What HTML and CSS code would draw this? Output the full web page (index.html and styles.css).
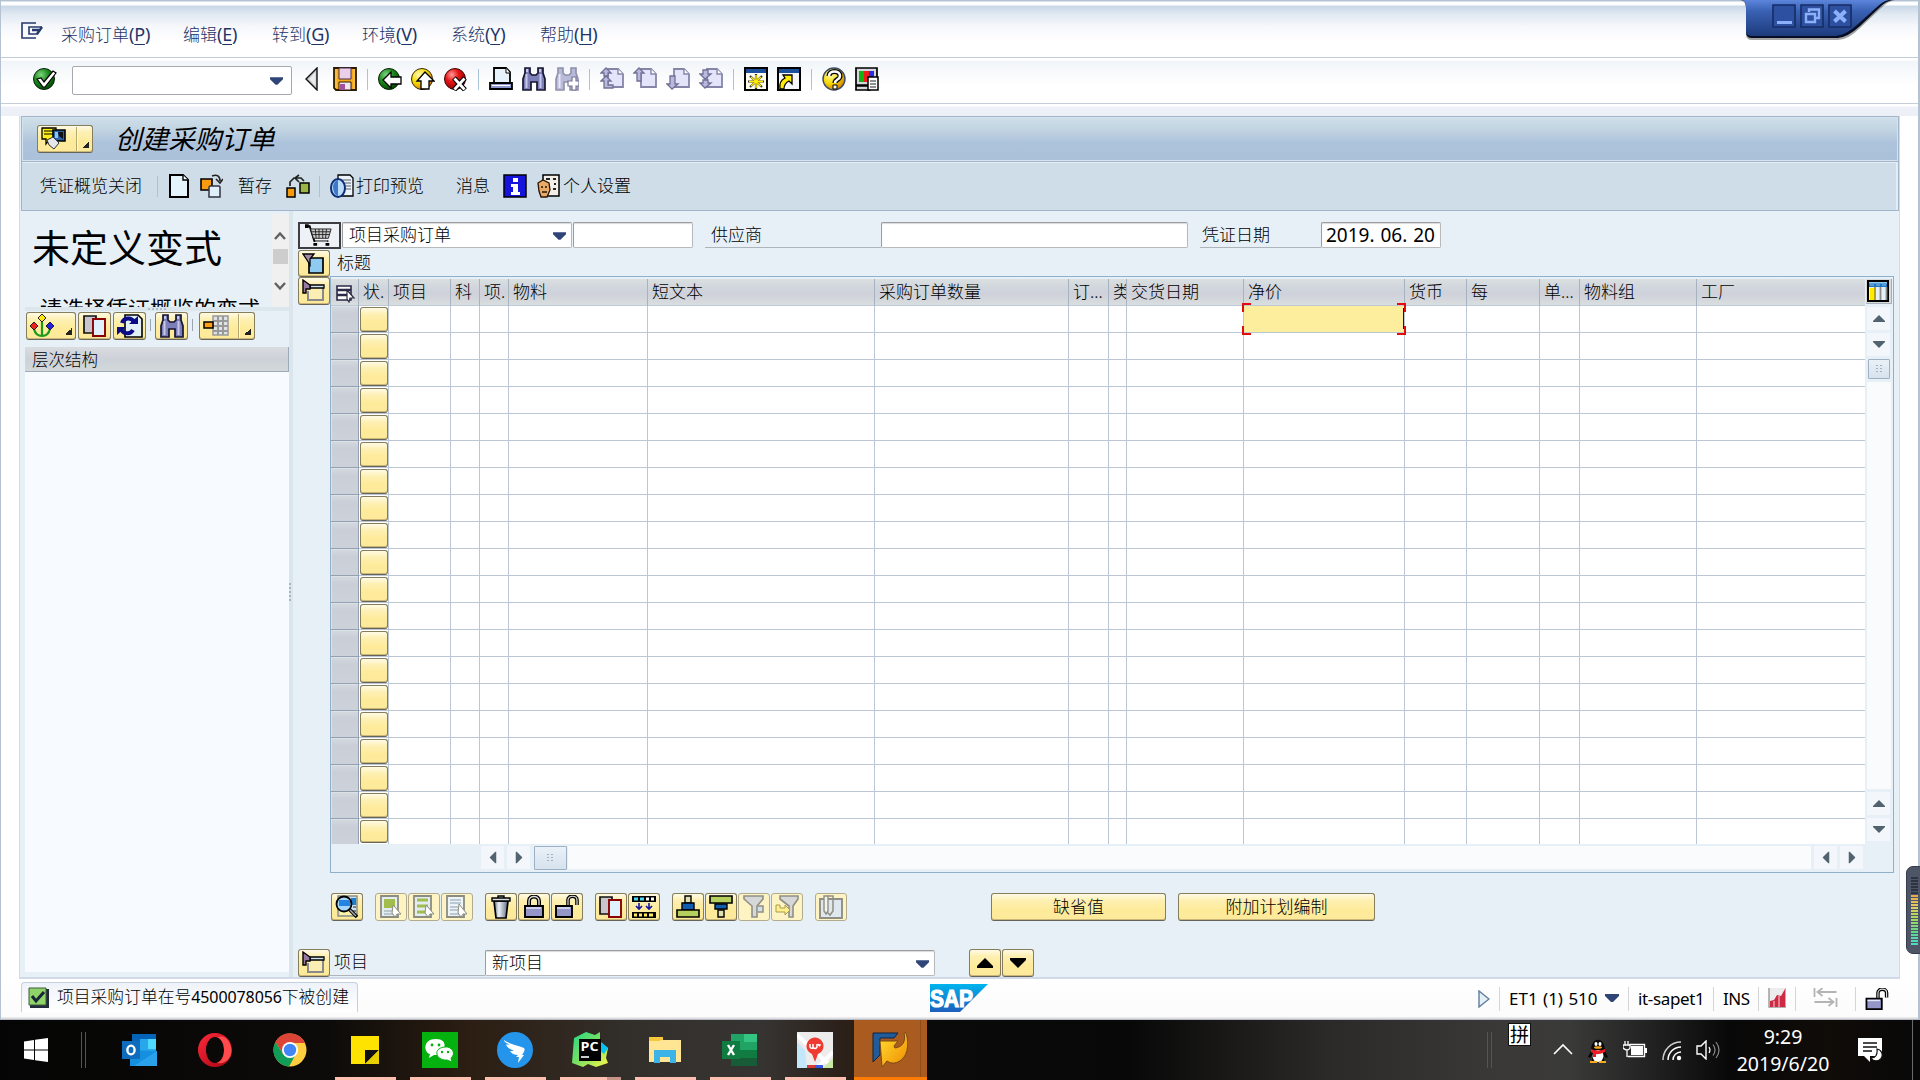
FILE: index.html
```html
<!DOCTYPE html>
<html lang="zh-CN">
<head>
<meta charset="utf-8">
<title>创建采购订单</title>
<link rel="stylesheet" href="styles.css">
</head>
<body>
<svg class="sprite" aria-hidden="true">
  <defs>
    <radialGradient id="g-green" cx=".35" cy=".3" r=".8"><stop offset="0" stop-color="#7fd67f"/><stop offset=".45" stop-color="#1c8a1c"/><stop offset="1" stop-color="#003c00"/></radialGradient>
    <radialGradient id="g-yellow" cx=".35" cy=".3" r=".8"><stop offset="0" stop-color="#fffbb0"/><stop offset=".5" stop-color="#f5d800"/><stop offset="1" stop-color="#d06a00"/></radialGradient>
    <radialGradient id="g-red" cx=".35" cy=".3" r=".8"><stop offset="0" stop-color="#ff9a9a"/><stop offset=".4" stop-color="#e81414"/><stop offset="1" stop-color="#7a0000"/></radialGradient>
    <linearGradient id="g-sap" x1="0" y1="0" x2="0" y2="1"><stop offset="0" stop-color="#00b4ee"/><stop offset="1" stop-color="#1d5fbe"/></linearGradient>
    <linearGradient id="g-tab" x1="0" y1="0" x2="0" y2="1"><stop offset="0" stop-color="#5c86dc"/><stop offset=".3" stop-color="#3a62b4"/><stop offset="1" stop-color="#1d3a7c"/></linearGradient>
    <linearGradient id="g-can" x1="0" y1="0" x2="1" y2="0"><stop offset="0" stop-color="#68707a"/><stop offset=".35" stop-color="#eef2f8"/><stop offset="1" stop-color="#5d6c84"/></linearGradient>
    <linearGradient id="g-opera" x1="0" y1="0" x2="1" y2="1"><stop offset="0" stop-color="#ff2b3c"/><stop offset="1" stop-color="#a50010"/></linearGradient>
    <linearGradient id="g-py" x1="0" y1="0" x2="1" y2="1"><stop offset="0" stop-color="#21d789"/><stop offset=".5" stop-color="#7be060"/><stop offset="1" stop-color="#fcf84a"/></linearGradient>
    <linearGradient id="g-gold" x1="0" y1="0" x2="1" y2="1"><stop offset="0" stop-color="#ffdf30"/><stop offset="1" stop-color="#f08a00"/></linearGradient>
  </defs>
  <symbol id="i-menu" viewBox="0 0 22 18"><path d="M15 1H1v15h14M21 5H8v7h9" fill="none" stroke="#24386c" stroke-width="1.6"/><path d="M21 5l-5 7M11 8h7" fill="none" stroke="#24386c" stroke-width="2.4"/></symbol>
  <symbol id="i-ok" viewBox="0 0 24 24"><circle cx="11" cy="12" r="10.5" fill="url(#g-green)" stroke="#062006"/><path d="M4 12l4-1 3 4L20 4l3 2-11 14h-2z" fill="#fff" stroke="#000" stroke-width="1.2"/></symbol>
  <symbol id="i-prev" viewBox="0 0 24 24"><path d="M17 1v22L6 12z" fill="#c9c9c9" stroke="#111" stroke-width="1.4"/><path d="M15.500 5v14L9 12z" fill="#ececec"/></symbol>
  <symbol id="i-save" viewBox="0 0 24 24"><path d="M1 1h22v22H3l-2-2z" fill="#f5a81c" stroke="#2b1a00" stroke-width="1.8"/><path d="M6 1h12v11H6z" fill="#e9cfe9" stroke="#4b3050"/><path d="M6 15h12v8H6z" fill="#f2e6ee" stroke="#2b1a00"/><path d="M7 17h5v6H7z" fill="#a0529a"/><path d="M3 2v19M21 2v20" stroke="#ffd060"/></symbol>
  <symbol id="i-back" viewBox="0 0 24 24"><circle cx="11" cy="12" r="10.500" fill="url(#g-green)" stroke="#062006"/><path d="M5 13l8-8v5h10v7H13v4z" fill="#fff" stroke="#000" stroke-width="1.3"/></symbol>
  <symbol id="i-exit" viewBox="0 0 24 24"><circle cx="11" cy="12" r="10.500" fill="url(#g-yellow)" stroke="#3c2a00"/><path d="M14 5l9 9h-5v8h-8v-8H6z" fill="#fff" stroke="#000" stroke-width="1.3"/></symbol>
  <symbol id="i-cancel" viewBox="0 0 24 24"><circle cx="11" cy="12" r="10.500" fill="url(#g-red)" stroke="#3c0000"/><path d="M10 11l11 12M21 11L10 23" stroke="#000" stroke-width="5"/><path d="M10.500 11.500l10 11M20.500 11.500l-10 11" stroke="#fff" stroke-width="2.800"/></symbol>
  <symbol id="i-print" viewBox="0 0 24 24"><path d="M5 16V1h12l4 4v11z" fill="#e8f2fa" stroke="#000" stroke-width="1.800"/><path d="M17 1v5h4" fill="#fff" stroke="#000"/><path d="M1 16h22v6H1z" fill="#8f95cf" stroke="#000" stroke-width="1.800"/><path d="M3 18.500h18" stroke="#fff"/></symbol>
  <symbol id="i-find" viewBox="0 0 24 24"><path d="M3 1h5v5l2 2h4l2-2V1h5v5l2 6v11h-8v-8h-6v8H1V12l2-6z" fill="#7d7fb8" stroke="#15152e" stroke-width="1.700"/><path d="M4.500 7v14M18.500 7v14M5 2v3M18 2v3" stroke="#c5c8ea" stroke-width="2"/></symbol>
  <symbol id="i-findnext" viewBox="0 0 24 24"><g opacity=".6"><path d="M3 1h5v5l2 2h4l2-2V1h5v5l2 6v11h-8v-8h-6v8H1V12l2-6z" fill="#8f91c4" stroke="#4a4a72" stroke-width="1.600"/><path d="M4.500 7v14" stroke="#d5d8f2" stroke-width="2"/></g><path d="M13 14h4v-4h4v4h3v5h-3v4h-4v-4h-4z" fill="#fff" stroke="#77779b" stroke-width="1.200"/></symbol>
  <symbol id="i-page" viewBox="0 0 24 24"><path d="M8 2h10l5 5v13H8z" fill="#e4e4fa" stroke="#8585a8" stroke-width="1.800"/><path d="M18 2v5h5" fill="#fff" stroke="#8585a8" stroke-width="1.400"/></symbol>
  <symbol id="i-first" viewBox="0 0 24 24"><use href="#i-page"/><path d="M6 1l5 5H8v3H4V6H1zM6 9l5 5H8v4h5v3H4v-7H1z" fill="#b9b9de" stroke="#707096" stroke-width="1.300"/></symbol>
  <symbol id="i-pgup" viewBox="0 0 24 24"><use href="#i-page"/><path d="M6 1l5 5H8v8H4V6H1z" fill="#b9b9de" stroke="#707096" stroke-width="1.300"/></symbol>
  <symbol id="i-pgdn" viewBox="0 0 24 24"><use href="#i-page"/><path d="M6 22l-5-5h3V9h5v8h3z" fill="#b9b9de" stroke="#707096" stroke-width="1.300"/></symbol>
  <symbol id="i-last" viewBox="0 0 24 24"><use href="#i-page"/><path d="M6 12L1 7h3V3h5v4h3zM6 21l-5-5h3v-3h5v3h3z" fill="#b9b9de" stroke="#707096" stroke-width="1.300"/></symbol>
  <symbol id="i-session" viewBox="0 0 24 24"><path d="M1 1h22v22H1z" fill="#fffef0" stroke="#000" stroke-width="2"/><path d="M2 2h20v4H2z" fill="#1c4f9c"/><path d="M12 7v15M4 14.500h16M6 9l12 11M18 9L6 20" stroke="#333" stroke-width="2.200"/><path d="M12 8v13M5 14.500h14M7 10l10 9M17 10L7 19" stroke="#ffec00" stroke-width="1.500"/></symbol>
  <symbol id="i-shortcut" viewBox="0 0 24 24"><path d="M1 1h22v22H1z" fill="#f4f6fa" stroke="#000" stroke-width="2"/><path d="M2 2h20v4H2z" fill="#1c4f9c"/><path d="M3 22c-1-6 1-9 5-11L6 8h9v9l-3-3c-4 2-5 4-5 8z" fill="#ffec00" stroke="#000" stroke-width="1.300"/></symbol>
  <symbol id="i-help" viewBox="0 0 24 24"><circle cx="12" cy="12" r="11" fill="url(#g-yellow)" stroke="#3a4a6a" stroke-width="1.400"/><path d="M7 9c0-6 11-6 11 0 0 4-5 3-5 7" fill="none" stroke="#000" stroke-width="5"/><path d="M7 9c0-6 11-6 11 0 0 4-5 3-5 7" fill="none" stroke="#fff" stroke-width="2.600"/><path d="M11 18h4v4h-4z" fill="#fff" stroke="#000"/></symbol>
  <symbol id="i-layout" viewBox="0 0 24 24"><path d="M1 1h21v17H1zM1 19h14v4H1z" fill="#d4d8dc" stroke="#000" stroke-width="1.700"/><path d="M4 4h5v11H4z" fill="#10b410"/><path d="M9 4h5v11H9z" fill="#ef1c1c"/><path d="M14 4h5v11h-5z" fill="#2c2ce0"/><path d="M13 10h10v13H13z" fill="#fff" stroke="#000" stroke-width="1.500"/><path d="M15 14h6M15 17h6M15 20h6" stroke="#222" stroke-width="1.200"/></symbol>
  <symbol id="i-other" viewBox="0 0 26 24"><path d="M1 1h14v11H9l-4 5v-5H1z" fill="#ffef16" stroke="#000" stroke-width="1.300"/><path d="M3 4h9M3 7h9" stroke="#000"/><path d="M12 3h12v11H12z" fill="#2a63a8" stroke="#000" stroke-width="1.600"/><path d="M17 5h5v7l-4-3z" fill="#111"/><path d="M14 5h3v6h-3z" fill="#8fc4f4"/><path d="M6 13l6-3 6 6-5 6-5-4z" fill="#e4e6ea" stroke="#333"/></symbol>
  <symbol id="i-new" viewBox="0 0 24 24"><path d="M3 1h13l5 5v17H3z" fill="#e3f4fc" stroke="#000" stroke-width="2"/><path d="M16 1v5h5" fill="#fff" stroke="#000" stroke-width="1.400"/></symbol>
  <symbol id="i-otherpo" viewBox="0 0 24 24"><path d="M2 5h11v11H2z" fill="#f79a10" stroke="#000" stroke-width="1.600"/><path d="M11 12h9l1 1v10H10V13z" fill="#dff0fb" stroke="#334" stroke-width="1.500"/><path d="M13 2c5-2 8 0 8 5M17 5l4 4 3-4" fill="none" stroke="#222" stroke-width="1.600"/></symbol>
  <symbol id="i-hold" viewBox="0 0 24 24"><path d="M1 14h8v9H1z" fill="#f79a10" stroke="#000" stroke-width="1.500"/><path d="M14 9h9v10h-9z" fill="#9ab545" stroke="#000" stroke-width="1.500"/><path d="M4 12V8l4-4h7l3 3M13 1L9 4l4 4" fill="none" stroke="#222" stroke-width="1.700"/></symbol>
  <symbol id="i-preview" viewBox="0 0 24 24"><path d="M8 1h12l3 3v18H8z" fill="#edf3fa" stroke="#000" stroke-width="1.300"/><path d="M12 6h9M12 9h9M12 12h9M12 15h9" stroke="#555b66"/><ellipse cx="8" cy="14" rx="7" ry="9" fill="#bcdcfa" stroke="#0d2e78" stroke-width="2"/><path d="M3 12c2-6 4-6 5-6v16c-3 0-5-5-5-10z" fill="#3f78c8"/></symbol>
  <symbol id="i-info" viewBox="0 0 24 24"><path d="M1 1h22v22H1z" fill="#1414dc" stroke="#000" stroke-width="1.500"/><path d="M10 4h5v4h-5zM8 10h7v8h2v3H8v-3h2v-5H8z" fill="#fff"/></symbol>
  <symbol id="i-person" viewBox="0 0 24 24"><path d="M7 1h16v21H7z" fill="#f3efe8" stroke="#000" stroke-width="1.500"/><path d="M10 5h4M17 5h3M18 10h2M17 15h3" stroke="#222" stroke-width="2"/><path d="M2 9l5-3 6 3 1 7-3 7H5l-2-6z" fill="#e8aa68" stroke="#2a1400" stroke-width="1.300"/><path d="M6 12v2M10 12v2M6 18h5" stroke="#2a1400" stroke-width="1.500"/></symbol>
  <symbol id="i-cart" viewBox="0 0 30 24"><path d="M1 2h4l5 16h15" fill="none" stroke="#000" stroke-width="2"/><path d="M6 5h22l-3 10H9z" fill="#ccc" stroke="#222"/><path d="M7 8h20M8 11h18M11 5l1 10M15 5v10M19 5v10M23 5l-1 10" stroke="#222"/><path d="M11 18h13" stroke="#888" stroke-width="2"/><path d="M9 20h4v3H9zM22 20h4v3h-4zM0 0h4v4H0z"/></symbol>
  <symbol id="i-head" viewBox="0 0 24 24"><path d="M7 6h14v15H7z" fill="#8fcaf2" stroke="#000" stroke-width="1.700"/><path d="M1 2h11L8 7v6L5 8z" fill="#a289a8" stroke="#000" stroke-width="1.300"/></symbol>
  <symbol id="i-item" viewBox="0 0 24 24"><path d="M7 7h14v14H6V12" fill="#fbeeb4" stroke="#8a8a8a" stroke-width="2"/><path d="M8 6h14v3H8z" fill="#cfe6f4" stroke="#000" stroke-width="1.300"/><path d="M1 1l7 5v4H4v4H1z" fill="#97789e" stroke="#000" stroke-width="1.400"/></symbol>
  <symbol id="i-flower" viewBox="0 0 24 24"><path d="M12 8v15M12 22c-5 0-7-3-8-7M12 22c5 0 7-3 8-7" fill="none" stroke="#1b9a1b" stroke-width="2.200"/><path d="M12 0l4 4-4 4-4-4z" fill="#ffe80f" stroke="#222"/><path d="M4 8l4 4-4 4-4-4z" fill="#f02020" stroke="#222"/><path d="M20 8l4 4-4 4-4-4z" fill="#2222e0" stroke="#222"/></symbol>
  <symbol id="i-copy" viewBox="0 0 24 24"><path d="M1 2h12v17H1z" fill="#c8c6cc" stroke="#111" stroke-width="1.700"/><path d="M10 5h12v17H10z" fill="#def1fd" stroke="#8b0000" stroke-width="1.900"/></symbol>
  <symbol id="i-refresh" viewBox="0 0 26 24"><path d="M8 1h13l4 4v18H8z" fill="#e4f0f8" stroke="#000" stroke-width="1.600"/><path d="M17 8a6.500 6.500 0 0 0-12 1M4 14a6.500 6.500 0 0 0 12 2" fill="none" stroke="#0b0b88" stroke-width="4"/><path d="M12 10h9V2zM9 13H0v8z" fill="#0b0b88"/></symbol>
  <symbol id="i-column" viewBox="0 0 26 24"><path d="M10 2h15v19H10z" fill="#dfe3e6" stroke="#999" stroke-width="1.500"/><path d="M15 2v19M20 2v19M10 7h15M10 12h15M10 17h15" stroke="#999" stroke-width="2"/><path d="M1 8h9v6H1z" fill="#ff9e12" stroke="#000" stroke-width="1.500"/></symbol>
  <symbol id="i-selall" viewBox="0 0 20 18"><path d="M1 1h14v14H1z" fill="#fff" stroke="#2b2a48" stroke-width="1.600"/><path d="M1 5h14M1 10h14" stroke="#2b2a48" stroke-width="2.400"/><path d="M11 5l7 8h-4l-1 4-2-3z" fill="#fff" stroke="#2b2a48" stroke-width="1.200"/></symbol>
  <symbol id="i-config" viewBox="0 0 22 22"><path d="M1 1h20v20H1z" fill="#e8f0f7" stroke="#000" stroke-width="2"/><path d="M2 2h18v5H2z" fill="#1c78c0"/><path d="M2 2h18v1.500H2z" fill="#8fc8f0"/><path d="M3 4h4v2H3zM9 4h4v2H9zM15 4h4v2h-4z" fill="#5a9ad0"/><path d="M3 8h4v12H3z" fill="#ffea00"/><path d="M8 7v13" stroke="#b09a00" stroke-width="1.800"/><path d="M13.500 7v13M19.500 7v13" stroke="#888" stroke-width="1.800"/></symbol>
  <symbol id="i-detail" viewBox="0 0 24 24"><path d="M3 1h19v20H3z" fill="#cfe0ee" stroke="#8d8d80" stroke-width="1.500"/><path d="M16 3h5v7h-5z" fill="#1a7fd0"/><path d="M5 16h12v4H5z" fill="#fdf3a8"/><path d="M18 12h3M18 16h3" stroke="#222"/><circle cx="9" cy="9" r="7.500" fill="#a6d7fb" stroke="#000" stroke-width="1.800"/><path d="M4 5h11v6H4z" fill="#2584e2"/><path d="M14 14l8 8" stroke="#000" stroke-width="3.600"/><path d="M15 15l6 6" stroke="#aaa" stroke-width="1.500"/></symbol>
  <symbol id="i-sel1" viewBox="0 0 24 24"><path d="M2 1h17v21H2z" fill="#e3ecf0" stroke="#8c8c80" stroke-width="1.800"/><path d="M5 4h11v9H5z" fill="#a3bd4c"/><path d="M5 16h9M5 19h9" stroke="#aab9c4" stroke-width="1.500"/><path d="M14 10l8 9h-4l-2 3-3-4z" fill="#fff" stroke="#8c8c80"/></symbol>
  <symbol id="i-sel2" viewBox="0 0 24 24"><path d="M2 1h17v21H2z" fill="#e3ecf0" stroke="#8c8c80" stroke-width="1.800"/><path d="M5 5h11M5 11h11M5 17h9" stroke="#a3bd4c" stroke-width="3"/><path d="M14 10l8 9h-4l-2 3-3-4z" fill="#fff" stroke="#8c8c80"/></symbol>
  <symbol id="i-sel3" viewBox="0 0 24 24"><path d="M2 1h17v21H2z" fill="#eef3f6" stroke="#8c8c80" stroke-width="1.800"/><path d="M5 5h11M5 8h11M5 12h9M5 15h9M5 19h9" stroke="#a9bac8" stroke-width="1.400"/><path d="M14 9l8 10h-4l-2 3-3-4z" fill="#fff" stroke="#8c8c80"/></symbol>
  <symbol id="i-trash" viewBox="0 0 24 24"><path d="M5 6h14l-2 17H7z" fill="url(#g-can)" stroke="#000" stroke-width="1.700"/><path d="M3 3h18v3H3zM9 1h6v2H9z" fill="#d8dce2" stroke="#000" stroke-width="1.400"/></symbol>
  <symbol id="i-lock" viewBox="0 0 24 24"><path d="M7 11V6c0-6 10-6 10 0v5" fill="none" stroke="#000" stroke-width="4"/><path d="M7 11V6c0-6 10-6 10 0v5" fill="none" stroke="#ddd" stroke-width="1.400"/><path d="M3 11h18v11H3z" fill="#9496c8" stroke="#000" stroke-width="1.900"/><path d="M4 13h15" stroke="#e6e6fa" stroke-width="1.500"/></symbol>
  <symbol id="i-unlock" viewBox="0 0 24 24"><path d="M13 11V5c0-5 9-5 9 0v5" fill="none" stroke="#000" stroke-width="3.600"/><path d="M13 11V5c0-5 9-5 9 0v5" fill="none" stroke="#ddd" stroke-width="1.200"/><path d="M1 11h16v11H1z" fill="#9496c8" stroke="#000" stroke-width="1.900"/><path d="M2 13h13" stroke="#e6e6fa" stroke-width="1.500"/></symbol>
  <symbol id="i-split" viewBox="0 0 24 24"><path d="M0 1h24v6H0zM0 17h24v6H0z" fill="#000"/><path d="M2 2.500h4v3H2zM8 2.500h4v3H8z" fill="#4ed7f0"/><path d="M14 2.500h3v3h-3zM19 2.500h3v3h-3z" fill="#fff"/><path d="M2 18.500h3v3H2zM7 18.500h3v3H7zM12 18.500h3v3h-3zM17 18.500h4v3h-4z" fill="#ffe95a"/><path d="M7 8v5M4 11l3 3 3-3M17 8v5M14 11l3 3 3-3" fill="none" stroke="#1414a0" stroke-width="1.600"/></symbol>
  <symbol id="i-asc" viewBox="0 0 24 24"><path d="M9 1h6v7H9z" fill="#dfe2b0" stroke="#000" stroke-width="1.400"/><path d="M6 8h12v7H6z" fill="#0f5eb0" stroke="#000" stroke-width="1.400"/><path d="M1 15h22v7H1z" fill="#b5d05c" stroke="#000" stroke-width="1.600"/></symbol>
  <symbol id="i-desc" viewBox="0 0 24 24"><path d="M1 1h22v7H1z" fill="#b5d05c" stroke="#000" stroke-width="1.600"/><path d="M6 9h12v5H6z" fill="#0f5eb0" stroke="#000" stroke-width="1.400"/><path d="M9 15h6v7H9z" fill="#dfe2b0" stroke="#000" stroke-width="1.400"/></symbol>
  <symbol id="i-filter" viewBox="0 0 24 24"><path d="M2 1h19v3l-6 7v11h-5V11L2 4z" fill="#d6d8d8" stroke="#8f8f85" stroke-width="1.600"/><path d="M16 11h5v6h-5" fill="#cfe0ea" stroke="#8f8f85" stroke-width="1.500"/></symbol>
  <symbol id="i-filter2" viewBox="0 0 24 24"><path d="M5 1h18v3l-5 7v11h-4V11L5 4z" fill="#d6d8d8" stroke="#8f8f85" stroke-width="1.600"/><path d="M1 10h4v3h5v-3l5 5-5 5v-3H1z" fill="#fff08a" stroke="#a89c50"/></symbol>
  <symbol id="i-clip" viewBox="0 0 24 24"><path d="M1 4h22v19H1z" fill="#dfe8ee" stroke="#8f8f85" stroke-width="1.900"/><path d="M5 1h4v15l-2 3-2-3z" fill="#f4f4ea" stroke="#8f8f85" stroke-width="1.400"/><path d="M9 1h5v5M14 6v10l-3 4-3-3" fill="none" stroke="#8f8f85" stroke-width="1.500"/></symbol>
  <symbol id="a-down" viewBox="0 0 14 8"><path d="M0 0h14v2L8 8H6L0 2z" fill="#2f4577"/></symbol>
  <symbol id="a-scroll" viewBox="0 0 12 7"><path d="M6 0l6 6v1H0V6z" fill="#50636f"/></symbol>
</svg>

<div class="window">
  <header class="menubar">
    <svg class="menu-icon"><use href="#i-menu"/></svg>
    <nav class="menu">
      <span class="m m1">采购订单<b>(<u>P</u>)</b></span><span class="m">编辑<b>(<u>E</u>)</b></span><span class="m m3">转到<b>(<u>G</u>)</b></span><span class="m">环境<b>(<u>V</u>)</b></span><span class="m">系统<b>(<u>Y</u>)</b></span><span class="m">帮助<b>(<u>H</u>)</b></span>
    </nav>
    <svg class="win-ctl" viewBox="0 0 160 44">
      <path d="M0 0Q6 1 6 8V34Q6 40 12 40H98Q108 40 120 28L140 9Q148 1 155 0Z" fill="#000" opacity=".35"/>
      <path d="M2 0Q6 1 6 8V32Q6 38 12 38H98Q108 37 120 26L139 8Q146 1 152 0Z" fill="#060c22"/>
      <path d="M2 0Q6 1 6 8V31Q6 36 12 36H96Q106 35 117 25L137 7Q143 1 149 0Z" fill="url(#g-tab)"/>
      <g fill="#2d51a0" stroke="#162c66" stroke-width="1.600"><path d="M33 5h22v22H33zM61 5h22v22H61zM89 5h22v22H89z"/></g>
      <g stroke="#8db1f8" fill="none"><path d="M37 22.500h15" stroke-width="3"/><path d="M66 14h9v8h-9zM69 12V9.500h10V18h-3" stroke-width="2.400"/><path d="M94.500 11l11 10.500M105.500 11l-11 10.500" stroke-width="4"/></g>
    </svg>
  </header>

  <div class="stdbar">
    <svg class="ic ok"><use href="#i-ok"/></svg>
    <div class="cmd"><svg class="dd"><use href="#a-down"/></svg></div>
    <div class="slots">
      <span class="slot"><svg class="ic"><use href="#i-prev"/></svg></span><span class="slot"><svg class="ic"><use href="#i-save"/></svg></span><i class="sep"></i>
      <span class="slot"><svg class="ic"><use href="#i-back"/></svg></span><span class="slot"><svg class="ic"><use href="#i-exit"/></svg></span><span class="slot"><svg class="ic"><use href="#i-cancel"/></svg></span><i class="sep"></i>
      <span class="slot"><svg class="ic"><use href="#i-print"/></svg></span><span class="slot"><svg class="ic"><use href="#i-find"/></svg></span><span class="slot"><svg class="ic"><use href="#i-findnext"/></svg></span><i class="sep"></i>
      <span class="slot"><svg class="ic"><use href="#i-first"/></svg></span><span class="slot"><svg class="ic"><use href="#i-pgup"/></svg></span><span class="slot"><svg class="ic"><use href="#i-pgdn"/></svg></span><span class="slot"><svg class="ic"><use href="#i-last"/></svg></span><i class="sep"></i>
      <span class="slot"><svg class="ic"><use href="#i-session"/></svg></span><span class="slot"><svg class="ic"><use href="#i-shortcut"/></svg></span><i class="sep"></i>
      <span class="slot"><svg class="ic"><use href="#i-help"/></svg></span><span class="slot"><svg class="ic"><use href="#i-layout"/></svg></span>
    </div>
  </div>

  <div class="gap-strip"></div>

  <section class="panel">
    <div class="titlebar">
      <button class="yb split gos"><svg class="ic26"><use href="#i-other"/></svg><i class="corner"></i></button>
      <h1>创建采购订单</h1>
    </div>
    <div class="appbar">
      <span>凭证概览关闭</span><i class="sep s1"></i>
      <svg class="ic a1"><use href="#i-new"/></svg><svg class="ic a2"><use href="#i-otherpo"/></svg>
      <span class="t2">暂存</span><svg class="ic a3"><use href="#i-hold"/></svg><i class="sep s2"></i>
      <svg class="ic a4"><use href="#i-preview"/></svg><span class="t3">打印预览</span>
      <span class="t4">消息</span><svg class="ic a5"><use href="#i-info"/></svg>
      <svg class="ic a6"><use href="#i-person"/></svg><span class="t5">个人设置</span>
    </div>

    <div class="body">
      <aside class="side">
        <div class="variant">
          <div class="variant-text"><h2>未定义变式</h2><p>请选择凭证概览的变式</p></div>
          <div class="vsb">
            <svg viewBox="0 0 16 16"><path d="M3 11l5-5.500 5 5.500"/></svg><i></i><svg viewBox="0 0 16 16"><path d="M3 5l5 5.500L13 5"/></svg>
          </div>
        </div>
        <div class="hsplit"><i></i></div>
        <div class="side-tools">
          <button class="yb w50"><svg class="ic"><use href="#i-flower"/></svg><i class="corner"></i></button>
          <button class="yb"><svg class="ic"><use href="#i-copy"/></svg></button>
          <button class="yb"><svg class="ic26"><use href="#i-refresh"/></svg></button>
          <i class="sep2"></i>
          <button class="yb"><svg class="ic"><use href="#i-find"/></svg></button>
          <i class="sep2"></i>
          <button class="yb split w56"><svg class="ic26"><use href="#i-column"/></svg><i class="corner"></i></button>
        </div>
        <div class="tree-head">层次结构</div>
        <div class="tree"></div>
      </aside>
      <div class="vsplit"><i></i></div>

      <main class="main">
        <div class="order-row">
          <div class="cart"><svg><use href="#i-cart"/></svg></div>
          <div class="field type">项目采购订单<svg class="dd"><use href="#a-down"/></svg></div>
          <div class="field num"></div>
          <div class="lbl sup">供应商</div>
          <div class="field vend"></div>
          <div class="lbl dlab">凭证日期</div>
          <div class="field date">2019<s>.</s>06<s>.</s>20</div>
        </div>
        <div class="work">
          <div class="rail"><button class="yb r1"><svg class="ic"><use href="#i-head"/></svg></button><button class="yb r2"><svg class="ic"><use href="#i-item"/></svg></button></div>
          <div class="right">
            <div class="hdr-label">标题</div>
            <div class="table">
              <div class="grid" id="grid"></div>
              <div class="vscroll">
                <div class="conf"><svg><use href="#i-config"/></svg></div>
                <div class="sb"><svg><use href="#a-scroll"/></svg></div>
                <div class="sb"><svg class="flip"><use href="#a-scroll"/></svg></div>
                <div class="thumb v"><i></i></div>
                <div class="track"></div>
                <div class="sb"><svg><use href="#a-scroll"/></svg></div>
                <div class="sb"><svg class="flip"><use href="#a-scroll"/></svg></div>
              </div>
              <div class="hscroll">
                <div class="sb"><svg class="lt"><use href="#a-scroll"/></svg></div>
                <div class="sb"><svg class="rt"><use href="#a-scroll"/></svg></div>
                <div class="thumb h"><i></i></div>
                <div class="track"></div>
                <div class="sb"><svg class="lt"><use href="#a-scroll"/></svg></div>
                <div class="sb"><svg class="rt"><use href="#a-scroll"/></svg></div>
              </div>
            </div>
          </div>
        </div>
        <div class="item-tools">
          <div class="grp"><button class="yb"><svg class="ic"><use href="#i-detail"/></svg></button></div>
          <div class="grp off"><button class="yb"><svg class="ic"><use href="#i-sel1"/></svg></button><button class="yb"><svg class="ic"><use href="#i-sel2"/></svg></button><button class="yb"><svg class="ic"><use href="#i-sel3"/></svg></button></div>
          <div class="grp"><button class="yb"><svg class="ic"><use href="#i-trash"/></svg></button><button class="yb"><svg class="ic"><use href="#i-lock"/></svg></button><button class="yb"><svg class="ic"><use href="#i-unlock"/></svg></button></div>
          <div class="grp"><button class="yb"><svg class="ic"><use href="#i-copy"/></svg></button><button class="yb"><svg class="ic"><use href="#i-split"/></svg></button></div>
          <div class="grp"><button class="yb"><svg class="ic"><use href="#i-asc"/></svg></button><button class="yb"><svg class="ic"><use href="#i-desc"/></svg></button><button class="yb off"><svg class="ic"><use href="#i-filter"/></svg></button><button class="yb off"><svg class="ic"><use href="#i-filter2"/></svg></button></div>
          <div class="grp off"><button class="yb"><svg class="ic"><use href="#i-clip"/></svg></button></div>
          <button class="yb txt b1">缺省值</button><button class="yb txt b2">附加计划编制</button>
        </div>
        <div class="item-row">
          <button class="yb"><svg class="ic"><use href="#i-item"/></svg></button>
          <div class="lbl il">项目</div>
          <div class="field isel">新项目<svg class="dd"><use href="#a-down"/></svg></div>
          <button class="yb nav1"><svg viewBox="0 0 16 10"><path d="M8 0l8 8v2H0V8z"/></svg></button>
          <button class="yb nav2"><svg viewBox="0 0 16 10"><path d="M8 10L0 2V0h16v2z"/></svg></button>
        </div>
      </main>
    </div>
  </section>

  <footer class="status">
    <div class="msg">
      <svg viewBox="0 0 21 21"><path d="M2 2h19v19H2z" fill="#222a3c"/><path d="M1 1h17v17H1z" fill="#8fd468" stroke="#3c5a3c"/><path d="M4 9l4 5 8-9" fill="none" stroke="#1a2438" stroke-width="3"/></svg>
      <span>项目采购订单在号<b>4500078056</b>下被创建</span>
    </div>
    <svg class="sap" viewBox="0 0 58 28"><path d="M0 0h58L30 28H0z" fill="url(#g-sap)"/><text x="0" y="23" textLength="43" lengthAdjust="spacingAndGlyphs">SAP</text></svg>
    <div class="info">
      <svg class="play" viewBox="0 0 12 18"><path d="M1 1v16l10-8z" fill="#e6eef5" stroke="#5c7f9f" stroke-width="1.400"/></svg><i></i>
      <span class="sys">ET1 (1) 510</span><svg class="dd"><use href="#a-down"/></svg><i></i>
      <span class="srv">it-sapet1</span><i></i>
      <span class="ins">INS</span><i></i>
      <svg class="chart" viewBox="0 0 18 20"><path d="M1 0v19h17V0" fill="#ececee" stroke="#999" stroke-width="1.400"/><path d="M2 13l4-1 3-5 4 1 4-7v18H2z" fill="#cf2a44"/><path d="M6 13v6M11 8v11" stroke="#f0b8c0" stroke-width="1.200"/></svg><i></i>
      <svg class="swap" viewBox="0 0 24 20"><path d="M1 0v9M5 4h18M9 0L4 4l5 4M23 10v9M1 14h18M15 10l5 4-5 4" fill="none" stroke="#b4b4b4" stroke-width="1.800"/></svg><i></i>
      <svg class="lk"><use href="#i-unlock"/></svg>
    </div>
  </footer>
</div>

<div class="meter"><i></i></div>

<div class="taskbar">
  <div class="start"><svg viewBox="0 0 24 24"><path d="M0 3.500l10-1.500v9.500H0zM11 1.800L24 0v11.500H11zM0 12.500h10V22L0 20.500zM11 12.500h13V24l-13-1.800z" fill="#fff"/></svg></div>
  <i class="grip"></i>
  <div class="apps">
    <div class="app"><svg viewBox="0 0 36 36"><path d="M10 2h24v32H10z" fill="#28a8ea"/><path d="M10 2h24v5H10z" fill="#0364b8"/><path d="M10 7h8v10h-8z" fill="#0a66b8"/><path d="M18 7h8v10h-8z" fill="#28a8ea"/><path d="M26 7h8v10h-8z" fill="#50d9ff"/><path d="M8 34V18l27 1v15z" fill="#1490df"/><path d="M12 34l23-15v15z" fill="#2aa2ea"/><path d="M0 9h18v18H0z" fill="#0f6cbd"/><ellipse cx="9" cy="18" rx="3.600" ry="4.400" fill="none" stroke="#fff" stroke-width="2.400"/></svg></div>
    <div class="app"><svg viewBox="0 0 36 36"><path fill-rule="evenodd" d="M18 1a17 17 0 1 0 0 34 17 17 0 0 0 0-34zm0 4c5 0 9 6 9 13s-4 13-9 13-9-6-9-13S13 5 18 5z" fill="url(#g-opera)"/><path d="M20 5c10-3 14 6 14.500 13S29 33 20 31c5-2 7-7 7-13S25 7 20 5z" fill="#ff4b4b"/></svg></div>
    <div class="app"><svg viewBox="0 0 36 36"><circle cx="18" cy="18" r="16.500" fill="#ffcd40"/><path d="M3.500 10A16.500 16.500 0 0 1 33 11H18l-7 11z" fill="#db4437"/><path d="M3.500 10A16.500 16.500 0 0 0 17 34.500L24 22H11z" fill="#0f9d58"/><circle cx="18" cy="18" r="8" fill="#fff"/><circle cx="18" cy="18" r="6.200" fill="#4285f4"/></svg></div>
    <div class="app on"><svg viewBox="0 0 36 36"><path d="M4 4h28v28H4z" fill="#ffe300"/><path d="M18 18h14L18 32z" fill="#111"/><path d="M32 18v14H18z" fill="#e8cf00"/></svg></div>
    <div class="app on"><svg viewBox="0 0 36 36"><path d="M0 0h36v36H0z" fill="#04b10e"/><path d="M14 7C0 7 2 21 8 22l-1 4 5-3h5c6-3 10-16-3-16z" fill="#fff"/><path d="M23 15c-13 1-9 14 2 13l5 2-1-4c6-5 0-12-6-11z" fill="#fff" stroke="#04b10e"/><g fill="#04b10e"><circle cx="10" cy="13" r="1.400"/><circle cx="17" cy="13" r="1.400"/><circle cx="20" cy="20" r="1.200"/><circle cx="26" cy="20" r="1.200"/></g></svg></div>
    <div class="app on"><svg viewBox="0 0 36 36"><circle cx="18" cy="18" r="18" fill="#2595ec"/><path d="M7 8c5 4 13 5 20 8 1 1 1 3-2 7h2l-6 8 1-6h-3l2-2c-3 0-6-1-8-4 2 0 3 0 4-.5-4-1-7-3-8-6h4C9 11 7 10 7 8z" fill="#fff"/></svg></div>
    <div class="app on dual"><svg viewBox="0 0 36 36"><path d="M2 6l12-6 9 3 5-3v10l8 6-2 10 2 5-12 4-8-3-5 3-11-4z" fill="url(#g-py)"/><path d="M28 9l8 7-4 6-5-4z" fill="#07c3f2"/><path d="M7 7h22v22H7z" fill="#000"/><text class="pc" x="8.500" y="19" textLength="18" lengthAdjust="spacingAndGlyphs">PC</text><path d="M9 25h8" stroke="#fff" stroke-width="1.600"/></svg></div>
    <div class="app on"><svg viewBox="0 0 36 36"><path d="M2 5h14v6H2z" fill="#f8c83c"/><path d="M2 8h32v22H2z" fill="#ffe594"/><path d="M2 5h13l-2 4H2z" fill="#f8c83c"/><path d="M7 31V18h22v13h-6v-6H13v6z" fill="#3cb4e8"/></svg></div>
    <div class="app on"><svg viewBox="0 0 36 36"><path d="M9 2h26v32H9z" fill="#21a366"/><path d="M22 2h13v8H22z" fill="#33c481"/><path d="M9 18h26v8H9z" fill="#107c41"/><path d="M9 26h26v8H9z" fill="#185c37"/><path d="M0 9h18v18H0z" fill="#107c41"/><path d="M6 13l6 10M12 13L6 23" stroke="#fff" stroke-width="2.400"/></svg></div>
    <div class="app on"><svg viewBox="0 0 36 36"><path d="M0 0h36v36H0z" fill="#ececec"/><path d="M0 10l8 8 2 18H0z" fill="#c3e6fa"/><path d="M0 3l36 33M20 36L36 20" stroke="#fff" stroke-width="4"/><path d="M26 36l10-10v10z" fill="#c9e8a6"/><path d="M18 30l-3-8a8.500 8.500 0 1 1 6 0z" fill="#ee3a30"/><path d="M13 12v3q1 2 3 1v-4M16 12v3q2 3 4 0v-3M21 12q2 4 2 0" fill="none" stroke="#fff" stroke-width="1.500"/><path d="M10 33h8v3h-8z" fill="#d83a34"/><path d="M18 33h8v3h-8z" fill="#3358e8"/></svg></div>
    <div class="app active"><svg viewBox="0 0 36 36"><path d="M1 1h25l-4 5H8v17l-7 7z" fill="#1f5c99" stroke="#0d2444"/><path d="M8 9h18l-4 5 1 2c8-1 11-7 9-15h2c4 13 1 25-8 29-4 2-8 1-11-1l-5 6z" fill="url(#g-gold)" stroke="#7a4a10"/></svg></div>
  </div>
  <div class="tray">
    <i class="grip"></i>
    <span class="ime">拼</span>
    <svg class="chev" viewBox="0 0 20 12"><path d="M1 11l9-9 9 9" fill="none" stroke="#fff" stroke-width="1.600"/></svg>
    <svg class="qq" viewBox="0 0 20 24"><path d="M3 12C3-3 17-3 17 12l3 6-2 1-2-2v5H4v-5l-2 2-2-1z" fill="#080808"/><ellipse cx="10" cy="17" rx="5.500" ry="6" fill="#fff"/><path d="M3 10q7 3 14 0v3q-7 3-9 2v3H5v-4l-2-1z" fill="#ec1c24"/><ellipse cx="8" cy="5" rx="1.500" ry="2" fill="#fff"/><ellipse cx="12" cy="5" rx="1.500" ry="2" fill="#fff"/><ellipse cx="10" cy="8.500" rx="4" ry="1.300" fill="#f7a81b"/><path d="M2 22h7v2H2zM11 22h7v2h-7z" fill="#f7a81b"/></svg>
    <svg class="bat" viewBox="0 0 24 18"><path d="M6.500 3.500h15v12h-17" fill="none" stroke="#fff" stroke-width="1.400"/><path d="M8 5h12v9H8zM22 7h2v5h-2z" fill="#fff"/><path d="M2 0v4M5 0v4M0 4h7v3q-1 2-3 2t-4-2zM4 9v7" fill="none" stroke="#fff" stroke-width="1.300"/></svg>
    <svg class="wifi" viewBox="0 0 20 20"><g fill="none" stroke="#fff" stroke-width="1.500"><path d="M1 19A18 18 0 0 1 19 1" opacity=".8"/><path d="M6 19A13 13 0 0 1 19 6"/><path d="M11 19a8 8 0 0 1 8-8"/></g><circle cx="17" cy="17" r="2.200" fill="#fff"/></svg>
    <svg class="spk" viewBox="0 0 24 20"><path d="M1 6h4l5-5v18l-5-5H1z" fill="none" stroke="#fff" stroke-width="1.400"/><path d="M13 7q2 3 0 6" fill="none" stroke="#fff" stroke-width="1.200"/><path d="M17 4.500q4 5.500 0 11M20 2q6 8 0 16" fill="none" stroke="#8a8a8a" stroke-width="1.200"/></svg>
    <div class="clock"><span>9:29</span><span>2019/6/20</span></div>
    <svg class="note" viewBox="0 0 26 26"><path d="M1 1h24v18H13v6l-6-6H1z" fill="#fff"/><path d="M6 6h14M6 10h14M6 14h9" stroke="#111" stroke-width="1.500"/><path d="M20 12a6 6 0 1 1-6 9q7 0 6-9z" fill="#fff" stroke="#111" stroke-width="1.200"/></svg>
    <i class="peek"></i>
  </div>
</div>
<script src="script.js"></script>
</body>
</html>
```

FILE: styles.css
```css
* { box-sizing: border-box; }
body {
  margin: 0;
  width: 1920px;
  height: 1080px;
  overflow: hidden;
  background: #fff;
  color: #000;
  font: 300 17px/20px "Noto Sans CJK SC", sans-serif;
}
button { font: inherit; padding: 0; margin: 0; color: #000; }
i, s { font-style: normal; text-decoration: none; }
svg { display: block; flex: none; }
.sprite { position: absolute; width: 0; height: 0; }
.ic { width: 24px; height: 24px; }
.ic26 { width: 26px; height: 24px; }
.dd { width: 13px; height: 8px; }

.window {
  height: 1020px;
  border: 1px solid #b4c2d2;
  border-width: 1px 2px 1px 1px;
  border-bottom-color: #b8bcc4;
  display: flex;
  flex-direction: column;
}

/* Menu */
.menubar {
  height: 57px;
  flex: none;
  border-bottom: 1px solid #c3cdd8;
  background: linear-gradient(#d8e3ee 0 1px, #fff 1px 4px, #c9d8e7 5px, #e3eaf3 14px, #f6f8fb 26px, #fff 40px);
  display: flex;
  position: relative;
}
.menu-icon { width: 22px; height: 18px; margin: 21px 0 0 20px; }
.menu { display: flex; gap: 31px; margin: 23px 0 0 18px; color: #1f3568; }
.m { width: 58px; white-space: nowrap; }
.m1 { width: 91px; }
.m3 { width: 59px; }
.m b { font: 400 18px/20px "Noto Sans", sans-serif; letter-spacing: -.2px; }
.m u { text-underline-offset: 3px; text-decoration-thickness: 1px; }
.win-ctl { position: absolute; left: 1739px; top: -1px; width: 160px; height: 44px; }

/* Standard toolbar */
.stdbar {
  height: 46px;
  flex: none;
  border-bottom: 1px solid #c5cdd8;
  background: linear-gradient(#fff 2px, #f1f5f9 3px, #fff 28px);
  display: flex;
  align-items: flex-start;
  padding-top: 9px;
}
.ok { margin-left: 32px; }
.cmd {
  width: 220px;
  height: 29px;
  margin: -1px 0 0 15px;
  border: 1px solid #a5a9ae;
  border-radius: 2px;
  background: #fff;
  display: flex;
  align-items: center;
  justify-content: flex-end;
  padding-right: 8px;
}
.slots { display: flex; margin-left: 3px; }
.slot { width: 33px; display: flex; justify-content: center; }
.sep { width: 1px; height: 21px; margin: 2px 5px 2px 6px; background: #a9c3d9; }
.gap-strip { height: 12px; flex: none; background: linear-gradient(#fff 2px, #eef2f8 3px, #eceff6); }

/* Panel */
.panel {
  margin: 0 18px 0 18px;
  border: 1px solid #d3dae8;
  border-top: 0;
  background: #e8f0f7;
}
.titlebar, .appbar { margin-left: 1px; border: 1px solid #a3b5cb; display: flex; align-items: center; }
.titlebar {
  height: 46px;
  box-shadow: inset 0 0 0 1px #d5e3ee;
  background: linear-gradient(#cfdfeb, #c3d5e2 12px, #adc3dc 26px, #abc1da);
  padding-left: 15px;
}
.titlebar h1 {
  margin: -3px 0 0 22px;
  font-weight: 400;
  font-size: 26.600px;
  line-height: 30px;
  font-style: italic;
}
.appbar {
  height: 49px;
  border-top: 0;
  background: #cfdde8;
  box-shadow: inset 0 1px #e4edf4, inset -2px 0 #e4edf4;
  padding-left: 18px;
  white-space: nowrap;
}
.appbar span { margin-top: -2px; }
.appbar .s1 { margin: 0 9px 0 15px; }
.a2 { margin-left: 8px; }
.appbar .t2 { margin-left: 15px; }
.a3 { margin-left: 14px; }
.appbar .s2 { margin: 0 10px 0 9px; }
.appbar .t3 { margin-left: 2px; }
.appbar .t4 { margin-left: 32px; }
.a5 { margin-left: 13px; }
.a6 { margin-left: 9px; }
.appbar .t5 { margin-left: 3px; }

/* Buttons */
.yb {
  width: 32px;
  height: 28px;
  flex: none;
  border: 1px solid #857d5c;
  border-bottom-color: #65635a;
  border-radius: 3px;
  background: linear-gradient(#fffbe6, #fdf0b4 6px, #feeb9a 60%, #fde99a);
  box-shadow: inset 0 -1px #cbb879;
  display: flex;
  align-items: center;
  justify-content: center;
  position: relative;
}
.txt { padding-bottom: 2px; }
.off .yb, .yb.off { border-color: #b3ab8e; background: #fdf3c3; box-shadow: none; }
.gos { width: 56px; }
.corner { width: 7px; height: 7px; background: linear-gradient(135deg, transparent 50%, #222 50%); align-self: flex-end; margin: 0 0 4px auto; }
.split, .w50 { justify-content: flex-start; padding: 0 3px; }
.split::after { content: ""; position: absolute; right: 14px; top: 1px; bottom: 1px; border-left: 1px solid #b5a770; border-right: 1px solid #fffbe0; }

/* Body */
.body { height: 767px; display: flex; border-bottom: 1px solid #d0d8e6; }
.side { width: 269px; padding-left: 5px; flex: none; }
.variant { height: 96px; display: flex; }
.variant-text { width: 247px; overflow: hidden; }
.variant h2 { margin: 7px 0 0 7px; font-weight: 400; font-size: 38px; line-height: 56px; }
.variant p { margin: 20px 0 0 15px; font-size: 22px; line-height: 26px; font-weight: 400; white-space: nowrap; }
.vsb { width: 17px; background: #f0f0f0; margin-top: 3px; }
.vsb svg { width: 16px; height: 16px; fill: none; stroke: #606060; stroke-width: 2.400; }
.vsb svg:first-child { margin-top: 14px; }
.vsb i { display: block; width: 15px; height: 15px; background: #cdcdcd; margin: 5px 0 14px 1px; }
.hsplit { height: 4px; width: 264px; background: #dce6ed; display: flex; justify-content: center; }
.hsplit i { width: 18px; height: 2px; margin-top: 1px; background: repeating-linear-gradient(90deg, #aebdca 0 2px, transparent 2px 4px); }
.side-tools { display: flex; gap: 2px; margin: 1px 0 0 1px; }
.side-tools .yb { width: 33px; }
.side-tools .w50 { width: 50px; }
.side-tools .w56 { width: 56px; margin-left: 2px; }
.sep2 { width: 1px; height: 12px; background: #9aa6b2; margin: 7px 2px 0; }
.tree-head {
  margin-top: 7px;
  width: 264px;
  height: 25px;
  padding: 2px 0 0 7px;
  font-size: 16.500px;
  background: linear-gradient(#d9dde0, #cdd1d8 50%, #d3d9da);
  border: 1px solid #9cabbc;
  border-width: 0 1px 1px 0;
}
.tree { height: 600px; width: 264px; background: #f7fafe; }
.vsplit { width: 4px; background: #dbe5ec; flex: none; display: flex; align-items: center; }
.vsplit i { width: 2px; height: 18px; margin: -5px 0 0 0; background: repeating-linear-gradient(#a3b5c4 0 2px, transparent 2px 4px); }

.main { width: 1605px; padding-left: 5px; }
.order-row { display: flex; height: 27px; margin-top: 11px; align-items: flex-start; }
.cart { width: 43px; height: 27px; border: 2px solid #3e3e42; display: flex; justify-content: center; background: #eef2f6; }
.cart svg { width: 28px; height: 23px; margin-left: -2px; }
.field {
  height: 26px;
  border: 1px solid #9a9ea2;
  border-right-color: #b6babd;
  border-bottom-color: #b6babd;
  background: #fff;
  box-shadow: inset 0 1px 1px #dadada;
  padding: 1px 5px 0 6px;
  border-radius: 2px;
  white-space: nowrap;
}
.field .dd { align-self: center; margin-left: auto; }
.type { width: 230px; margin-left: 1px; display: flex; }
.num { width: 120px; margin-left: 1px; }
.lbl { height: 26px; padding: 2px 0 0 5px; border-bottom: 1px solid #adb4ba; }
.sup { width: 176px; margin-left: 12px; padding-left: 6px; }
.vend { width: 307px; }
.dlab { width: 121px; margin-left: 12px; padding-left: 2px; }
.date { width: 120px; font: 400 19px/22px "Noto Sans", sans-serif; padding-left: 4px; }
.date s { display: inline-block; width: 11px; }

.work { display: flex; }
.rail { width: 32px; padding-top: 1px; }
.r1 { height: 27px; }
.hdr-label { height: 27px; padding: 3px 0 0 7px; }
.table {
  width: 1564px;
  height: 597px;
  border: 1px solid #8fb0cb;
  padding: 2px 0 0 0;
  display: grid;
  grid-template: 565px 28px / 1534px 28px;
}
.grid { height: 565px; }
.gr { display: grid; height: 27px; grid-template-columns: 28px 30px 62px 29px 29px 139px 227px 194px 40px 18px 117px 161px 62px 73px 40px 117px 168px; }
.gr > div { border: 1px solid #bcc7d5; border-width: 0 1px 1px 0; background: #fff; }
.gr > div:last-child { border-right: 0; }
.gr.last { height: 25px; }
.gr.last > div { border-bottom: 0; }
.gr.head > div {
  background: linear-gradient(#dadfe1, #cfd3db 45%, #cfd2da 60%, #d9dedf);
  border-color: #a7b2c0;
  border-bottom-color: #bfc9d6;
  padding: 2px 0 0 4px;
  white-space: nowrap;
  overflow: hidden;
}
.gr.head svg { width: 20px; height: 18px; margin: 4px 0 0 1px; }
.gr > .sel { background: linear-gradient(#d5d9df, #c9ced7 8px, #cdd2da); border-color: #93a1b3; box-shadow: inset 1px 1px #dde2e8; }
.gr > .st { padding: 1px 0 0 1px; }
.st .yb { width: 28px; height: 25px; }
.last .st .yb { height: 23px; }
.gr > .focus { background: #fdee9e; position: relative; }
.focus::before {
  content: "";
  position: absolute;
  inset: -3px -2px -3px -2px;
  --c: #e60c0c;
  background:
    linear-gradient(var(--c) 0 0) 0 0/9px 2px, linear-gradient(var(--c) 0 0) 0 0/2px 9px,
    linear-gradient(var(--c) 0 0) 100% 0/9px 2px, linear-gradient(var(--c) 0 0) 100% 0/2px 9px,
    linear-gradient(var(--c) 0 0) 0 100%/9px 2px, linear-gradient(var(--c) 0 0) 0 100%/2px 9px,
    linear-gradient(var(--c) 0 0) 100% 100%/9px 2px, linear-gradient(var(--c) 0 0) 100% 100%/2px 9px;
  background-repeat: no-repeat;
}
.focus::after { content: ""; position: absolute; right: 0; top: 2px; width: 1px; height: 21px; background: #101060; }

.vscroll { display: flex; flex-direction: column; padding: 0 2px 3px; gap: 3px; }
.conf { width: 26px; height: 25px; margin-left: -1px; border: 1px solid #a4b0bc; border-width: 0 1px 1px 0; padding: 1px; background: #d6dadd; }
.conf svg { width: 22px; height: 22px; }
.sb { width: 23px; height: 23px; background: #f3f7fb; display: flex; align-items: center; justify-content: center; flex: none; }
.sb svg { width: 12px; height: 7px; }
.flip { transform: scaleY(-1); }
.lt { transform: rotate(-90deg); }
.rt { transform: rotate(90deg); }
.thumb { background: linear-gradient(#eaf1f8, #d6e2ed); border: 1px solid #9db0c4; border-radius: 1px; display: flex; align-items: center; justify-content: center; flex: none; }
.thumb i { width: 7px; height: 8px; background: repeating-linear-gradient(#9fb0c0 0 1.500px, transparent 1.500px 3px); -webkit-mask: repeating-linear-gradient(90deg, #000 0 2px, transparent 2px 4px); }
.thumb.v { width: 22px; height: 20px; margin-left: 1px; }
.thumb.h { width: 33px; height: 24px; margin: 0 -2px 0 1px; }
.track { background: #fafbfc; flex: 1; }
.hscroll { display: flex; gap: 3px; padding: 2px 2px 0 150px; }
.hscroll .track { height: 23px; }

.item-tools { display: flex; margin: 20px 0 0 33px; gap: 12px; }
.grp { display: flex; gap: 1px; }
.b1 { width: 175px; margin-left: 132px; }
.b2 { width: 197px; }
.item-row { display: flex; margin-top: 28px; }
.il { width: 155px; height: 27px; padding: 2px 0 0 4px; }
.isel { width: 450px; margin-top: 1px; display: flex; }
.nav1 { margin-left: 34px; }
.nav2 { margin-left: 1px; }
.item-row .yb > svg:not(.ic) { width: 16px; height: 10px; }

/* Status bar */
.status {
  flex: 1;
  background: linear-gradient(#fff, #fbfbfc 38px, #dcdcdf 39px);
  display: flex;
  align-items: flex-start;
}
.msg {
  width: 337px;
  height: 30px;
  margin: 3px 0 0 20px;
  border: 1px solid #c3d0e0;
  border-bottom: 0;
  border-radius: 4px 4px 0 0;
  background: linear-gradient(#eef3f9, #fff);
  display: flex;
  padding: 4px 0 0 6px;
  white-space: nowrap;
}
.msg svg { width: 21px; height: 21px; }
.msg span { margin: -1px 0 0 8px; font-size: 16.800px; }
.msg b { font: 400 16px/18px "Noto Sans", sans-serif; letter-spacing: -.1px; }
.sap { width: 58px; height: 28px; margin: 5px 0 0 572px; }
.sap text { font: 700 24px "Liberation Sans", sans-serif; fill: #fff; stroke: #fff; stroke-width: 1.2; }
.info { display: flex; align-items: center; height: 40px; margin-left: 490px; font: 400 17px/20px "Noto Sans", sans-serif; white-space: nowrap; }
.info i { width: 1px; height: 24px; background: #d5d5d8; }
.info > i { margin: 0 9px; }
.play { width: 12px; height: 18px; }
.sys { width: 90px; word-spacing: 1px; }
.info .dd { width: 14px; margin: -3px 0 0 6px; }
.srv { width: 66px; letter-spacing: -.35px; }
.ins { width: 26px; letter-spacing: -.5px; }
.chart { width: 18px; height: 20px; }
.info .swap { width: 25px; height: 20px; margin: -3px 8px 0; }
.info .chart { margin-top: -3px; }
.lk { width: 24px; height: 23px; }

.meter {
  position: absolute;
  left: 1906px;
  top: 866px;
  width: 16px;
  height: 88px;
  border-radius: 7px 0 0 7px;
  background: #4e5567;
  border: 1px solid #363d4c;
  padding: 10px 0 0 4px;
}
.meter i {
  display: block;
  width: 7px;
  height: 68px;
  background:
    repeating-linear-gradient(transparent 0 2px, #4e5567 2px 3px),
    linear-gradient(#2d3340 0 18px, #e8a64a 18px, #e0d060 30px, #a8d860 42px, #5cd890 56px, #4fd8c8);
}

/* Taskbar */
.taskbar {
  height: 60px;
  display: flex;
  background: linear-gradient(90deg, #050505 0, #0d0b09 330px, #2c1e12 470px, #33302c 640px, #363432 760px, #2b1f17 850px, #0a0a0a 930px, #080808 1130px, #2c2a28 1330px, #3a3938 1500px, #3a3a39 1570px, #222 1650px, #080808 1730px, #100c08 1830px, #080808);
}
.start { width: 81px; padding: 18px 0 0 24px; }
.start svg { width: 24px; height: 24px; }
.grip { width: 5px; height: 36px; margin-top: 12px; border: 1px solid #555; border-width: 0 1px; }
.apps { display: flex; margin-left: 16px; }
.app { width: 75px; padding: 12px 0 0 20px; position: relative; }
.app svg { width: 36px; height: 36px; }
.on::after { content: ""; position: absolute; left: 8px; bottom: 0; width: 61px; height: 3px; background: #fcbfb0; }
.dual::after { background: linear-gradient(90deg, #fcbfb0 47px, #c89488 47px); }
.active { width: 73px; margin-left: 2px; padding-left: 18px; background: linear-gradient(90deg, #a95b20 66px, #8f4d1c 66px 67px, #a95b20 67px); border-bottom: 3px solid #ff7b00; }
.pc { font: 700 12px "Open Sans", sans-serif; fill: #fff; }
.tray { display: flex; margin-left: 560px; }
.ime { width: 23px; height: 23px; margin: 3px 0 0 16px; background: #fff; font-size: 19px; line-height: 20px; text-align: center; font-weight: 400; border: 1px solid #111; }
.chev { width: 20px; height: 12px; margin: 23px 0 0 22px; }
.qq { width: 20px; height: 24px; margin: 19px 0 0 15px; }
.bat { width: 24px; height: 18px; margin: 21px 0 0 15px; }
.wifi { width: 20px; height: 20px; margin: 21px 0 0 15px; }
.spk { width: 24px; height: 20px; margin: 20px 0 0 14px; }
.clock { width: 94px; margin: 3px 0 0 16px; color: #fff; font: 400 19.500px/27px "Noto Sans", sans-serif; text-align: center; display: flex; flex-direction: column; white-space: nowrap; }
.note { width: 26px; height: 26px; margin: 17px 0 0 27px; }
.peek { width: 1px; height: 60px; background: #6a6a6a; margin-left: 29px; }
```

FILE: script.js
```javascript
const columns = ["", "状.", "项目", "科", "项.", "物料", "短文本", "采购订单数量", "订...", "类", "交货日期", "净价", "货币", "每", "单...", "物料组", "工厂"];
const ROWS = 20;
const FOCUS_COLUMN = 11;

const grid = document.getElementById("grid");

function addRow(className, render) {
  const row = document.createElement("div");
  row.className = "gr " + className;
  columns.forEach((name, i) => {
    const cell = document.createElement("div");
    render(cell, name, i);
    row.append(cell);
  });
  grid.append(row);
}

addRow("head", (cell, name, i) => {
  if (i === 0) cell.innerHTML = '<svg><use href="#i-selall"/></svg>';
  else cell.textContent = name;
});

for (let r = 0; r < ROWS; r++) {
  addRow(r === ROWS - 1 ? "last" : "", (cell, name, i) => {
    if (i === 0) cell.className = "sel";
    if (i === 1) {
      cell.className = "st";
      cell.innerHTML = '<button class="yb"></button>';
    }
    if (r === 0 && i === FOCUS_COLUMN) cell.className = "focus";
  });
}
```
